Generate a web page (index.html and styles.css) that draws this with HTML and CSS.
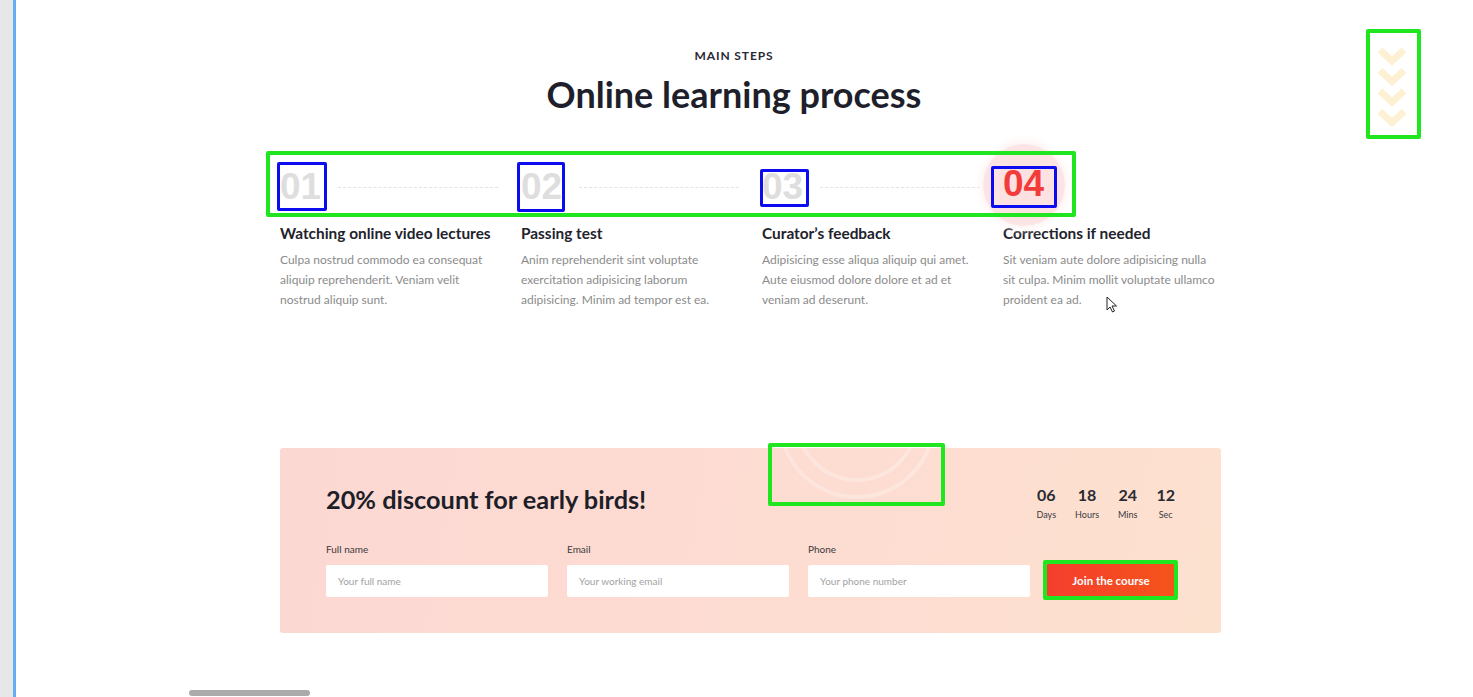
FILE: index.html
```html
<!DOCTYPE html>
<html lang="en">
<head>
<meta charset="utf-8">
<title>Online learning process</title>
<link rel="stylesheet" href="styles.css">
</head>
<body>
<div class="frame">
  <div class="edge"></div>
  <main class="page">
    <section class="steps-section">
      <p class="eyebrow">MAIN STEPS</p>
      <h2 class="heading">Online learning process</h2>
      <div class="steps">
        <div class="step">
          <div class="step-head"><span class="num">01</span><span class="dash"></span></div>
          <h3>Watching online video lectures</h3>
          <p>Culpa nostrud commodo ea consequat<br>aliquip reprehenderit. Veniam velit<br>nostrud aliquip sunt.</p>
        </div>
        <div class="step">
          <div class="step-head"><span class="num">02</span><span class="dash"></span></div>
          <h3>Passing test</h3>
          <p>Anim reprehenderit sint voluptate<br>exercitation adipisicing laborum<br>adipisicing. Minim ad tempor est ea.</p>
        </div>
        <div class="step">
          <div class="step-head"><span class="num">03</span><span class="dash"></span></div>
          <h3>Curator’s feedback</h3>
          <p>Adipisicing esse aliqua aliquip qui amet.<br>Aute eiusmod dolore dolore et ad et<br>veniam ad deserunt.</p>
        </div>
        <div class="step">
          <div class="step-head"><span class="num num-hot">04</span></div>
          <h3>Corrections if needed</h3>
          <p>Sit veniam aute dolore adipisicing nulla<br>sit culpa. Minim mollit voluptate ullamco<br>proident ea ad.</p>
        </div>
      </div>
    </section>

    <section class="promo">
      <div class="rings"><span class="ring ring-outer"></span><span class="ring ring-inner"></span></div>
      <div class="promo-top">
        <h2 class="promo-title">20% discount for early birds!</h2>
        <div class="countdown">
          <div class="cd"><b>06</b><span>Days</span></div>
          <div class="cd"><b>18</b><span>Hours</span></div>
          <div class="cd"><b>24</b><span>Mins</span></div>
          <div class="cd"><b>12</b><span>Sec</span></div>
        </div>
      </div>
      <form class="signup">
        <label class="field"><span>Full name</span><input type="text" placeholder="Your full name"></label>
        <label class="field"><span>Email</span><input type="text" placeholder="Your working email"></label>
        <label class="field"><span>Phone</span><input type="text" placeholder="Your phone number"></label>
        <button type="button" class="join">Join the course</button>
      </form>
    </section>
  </main>
</div>

<svg class="chevrons" viewBox="0 0 55 110" width="55" height="110" aria-hidden="true">
  <g fill="none" stroke="#fdf0d3" stroke-width="7">
    <path d="M14 21 L26 32 L38 21"/>
    <path d="M14 41.5 L26 52.5 L38 41.5"/>
    <path d="M14 62 L26 73 L38 62"/>
    <path d="M14 82.5 L26 93.5 L38 82.5"/>
  </g>
</svg>

<svg class="cursor" viewBox="0 0 12 17" width="12" height="17" aria-hidden="true">
  <path d="M1 1 L1 14 L4 11 L6.5 16 L8.5 15 L6 10 L10.5 10 Z" fill="#fff" stroke="#222" stroke-width="1" stroke-linejoin="round"/>
</svg>

<div class="marks" aria-hidden="true">
  <div class="mark green g1"></div>
  <div class="mark green g2"></div>
  <div class="mark green g3"></div>
  <div class="mark green g4"></div>
  <div class="mark blue b1"></div>
  <div class="mark blue b2"></div>
  <div class="mark blue b3"></div>
  <div class="mark blue b4"></div>
</div>

<div class="hscroll"></div>
</body>
</html>
```

FILE: styles.css
```css
html, body {
  margin: 0;
  padding: 0;
}

body {
  font-family: Lato, "Noto Sans", sans-serif;
  background: #fff;
  height: 697px;
  overflow: hidden;
  position: relative;
}

.frame {
  display: flex;
  min-height: 697px;
}

.edge {
  flex: none;
  width: 13px;
  background: #e7e7e7;
  border-right: 3px solid #64aef1;
}

.page {
  flex: 1;
  padding-left: 264px;
}

/* ---------- steps ---------- */
.steps-section {
  width: 941px;
  padding-top: 48px;
}

.eyebrow {
  margin: 0;
  padding-right: 33px;
  text-align: center;
  font-size: 12px;
  line-height: 16px;
  font-weight: 700;
  letter-spacing: 0.9px;
  color: #2a2a35;
}

.heading {
  margin: 9px 0 0;
  padding-right: 33px;
  text-align: center;
  font-size: 36px;
  line-height: 42px;
  font-weight: 700;
  color: #1e1f2b;
}

.steps {
  display: grid;
  grid-template-columns: repeat(4, 218px);
  column-gap: 23px;
  margin-top: 52px;
}

.step-head {
  display: flex;
  align-items: center;
  height: 40px;
}

.num {
  font-family: "Liberation Sans", Arial, sans-serif;
  font-weight: 700;
  font-size: 37px;
  line-height: 40px;
  color: #dedede;
}

.num-hot {
  position: relative;
  color: #f23c3c;
  transform: translateY(-3px);
}

.num-hot::before {
  content: "";
  position: absolute;
  left: 50%;
  top: 50%;
  width: 82px;
  height: 82px;
  margin: -40px 0 0 -41px;
  border-radius: 50%;
  background: radial-gradient(circle, #fde0e0 0, #fde3e3 60%, #feeded 100%);
  box-shadow: 0 0 8px 3px #fef3f3;
  z-index: -1;
}

.dash {
  flex: 1;
  margin-left: 17px;
  border-top: 1px dashed #e3e3e3;
}

.step h3 {
  margin: 16px 0 0;
  font-size: 15.4px;
  line-height: 20px;
  font-weight: 700;
  color: #22222c;
}

.step p {
  margin: 7px 0 0;
  font-size: 12px;
  line-height: 20px;
  color: #8b8b8b;
  white-space: nowrap;
}

/* ---------- promo ---------- */
.promo {
  position: relative;
  overflow: hidden;
  width: 941px;
  box-sizing: border-box;
  margin-top: 138px;
  padding: 35px 46px 36px;
  border-radius: 3px;
  background: linear-gradient(100deg, #fcd8d2 0%, #fddcd2 55%, #fde1cf 100%);
}

.rings {
  position: absolute;
  left: 577px;
  top: -28px;
  width: 0;
  height: 0;
}

.ring {
  position: absolute;
  border-radius: 50%;
  border: 4px solid rgba(255, 255, 255, 0.28);
}

.ring-outer {
  width: 150px;
  height: 150px;
  left: -79px;
  top: -79px;
}

.ring-inner {
  width: 116px;
  height: 116px;
  left: -62px;
  top: -62px;
}

.promo-top {
  position: relative;
  display: flex;
  justify-content: space-between;
  align-items: flex-start;
  height: 38px;
}

.promo-title {
  margin: 0;
  font-size: 25.3px;
  line-height: 32px;
  font-weight: 700;
  color: #1e1e28;
}

.countdown {
  display: flex;
  gap: 19px;
  margin-top: 2px;
}

.cd {
  display: flex;
  flex-direction: column;
  align-items: center;
  color: #2a2a30;
}

.cd b {
  font-size: 16px;
  line-height: 20px;
  font-weight: 700;
}

.cd span {
  margin-top: 4px;
  font-size: 9px;
  line-height: 12px;
  color: #3a3a40;
}

.signup {
  position: relative;
  display: flex;
  align-items: flex-end;
  margin: 22px 0 0;
}

.field {
  flex: none;
  display: flex;
  flex-direction: column;
  width: 222px;
}

.field + .field {
  margin-left: 19px;
}

.field span {
  margin-bottom: 10px;
  font-size: 10px;
  line-height: 12px;
  color: #3a3a3a;
}

.field input {
  height: 32px;
  box-sizing: border-box;
  border: 0;
  border-radius: 2px;
  padding: 0 12px;
  background: #fff;
  font-family: Lato, "Noto Sans", sans-serif;
  font-size: 10px;
  color: #333;
  outline: none;
}

.field input::placeholder {
  color: #a2a2a2;
}

.join {
  flex: none;
  margin-left: auto;
  width: 128px;
  height: 34px;
  border: 0;
  border-radius: 2px;
  background: linear-gradient(90deg, #f43e2e 0%, #f5541a 100%);
  color: #fff;
  font-family: Lato, "Noto Sans", sans-serif;
  font-size: 11.5px;
  font-weight: 700;
}

/* ---------- overlays ---------- */
.chevrons {
  position: absolute;
  left: 1366px;
  top: 29px;
}

.cursor {
  position: absolute;
  left: 1106px;
  top: 296px;
}

.marks {
  position: absolute;
  inset: 0;
  pointer-events: none;
}

.mark {
  position: absolute;
  box-sizing: border-box;
  border-radius: 2px;
}

.green {
  border: 4px solid #1fe61f;
}

.blue {
  border: 3px solid #0c0cf0;
}

.g1 { left: 266px; top: 151px; width: 810px; height: 66px; }
.g2 { left: 1366px; top: 29px; width: 55px; height: 110px; }
.g3 { left: 768px; top: 443px; width: 177px; height: 63px; }
.g4 { left: 1043px; top: 560px; width: 135px; height: 40px; }

.b1 { left: 277px; top: 162px; width: 50px; height: 49px; }
.b2 { left: 517px; top: 162px; width: 48px; height: 50px; }
.b3 { left: 760px; top: 169px; width: 49px; height: 38px; }
.b4 { left: 991px; top: 166px; width: 66px; height: 42px; }

.hscroll {
  position: absolute;
  left: 189px;
  top: 690px;
  width: 121px;
  height: 6px;
  border-radius: 3px;
  background: #ababab;
}
```
